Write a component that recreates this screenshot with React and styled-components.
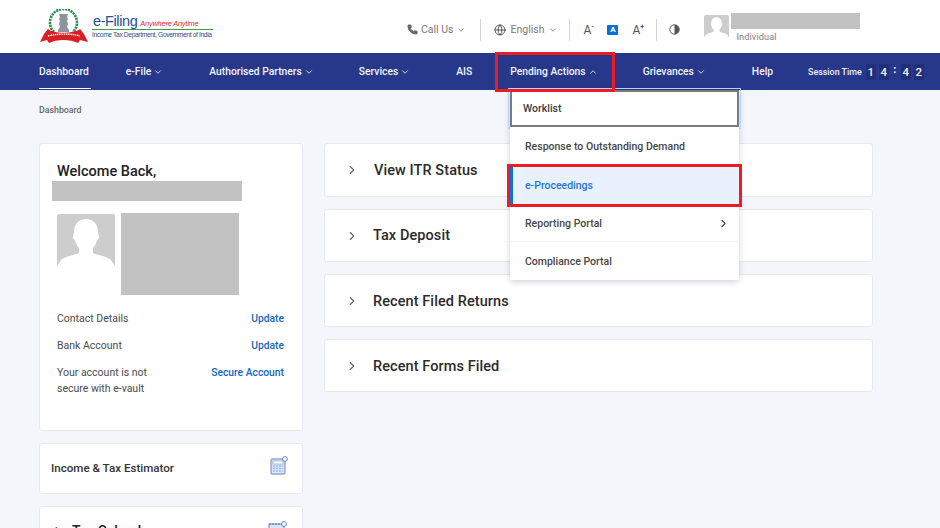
import React from 'react'
import styled, { createGlobalStyle } from 'styled-components'
import { ChevronDown, ChevronUp, ChevronRight, Phone, Globe } from 'lucide-react'

const Global = createGlobalStyle`
  html, body { margin: 0; padding: 0; background: #f4f6fb; }
  body { font-family: Roboto, "Liberation Sans", sans-serif; width: 940px; height: 528px; overflow: hidden; }
`

const Page = styled.div`
  position: relative;
  width: 940px;
  height: 528px;
  overflow: hidden;
  background: #f4f6fb;
`

const TopBar = styled.header`
  height: 53px;
  background: #fff;
  display: flex;
  align-items: center;
  padding-left: 40px;
`

const Logo = styled.div`
  display: flex;
  align-items: flex-start;
  gap: 4px;
  width: 173px;
  height: 36px;
  margin-top: -1px;
`

const LogoText = styled.div`
  display: flex;
  flex-direction: column;
  margin-top: 5px;
  width: 121px;
`

const LogoTop = styled.div`
  display: flex;
  align-items: baseline;
  gap: 3px;
  height: 16px;
  line-height: 16px;
  border-bottom: 1px solid #3f9a4a;
  padding-left: 1px;
  white-space: nowrap;
`

const Brand = styled.span`
  font-family: "Liberation Sans", sans-serif;
  font-size: 14.5px;
  letter-spacing: -0.4px;
  color: #24509a;
`

const Tagline = styled.span`
  font-family: "Liberation Sans", sans-serif;
  font-style: italic;
  font-size: 7.4px;
  letter-spacing: -0.2px;
  color: #e32636;
`

const Dept = styled.span`
  font-family: "Liberation Sans", sans-serif;
  font-size: 6.7px;
  line-height: 10px;
  letter-spacing: -0.37px;
  color: #2b4f86;
  white-space: nowrap;
`

const Tools = styled.div`
  display: flex;
  align-items: center;
  margin: 6px 0 0 194px;
  height: 22px;
  color: #7b7b7b;
  font-size: 10.5px;
`

const ToolItem = styled.div`
  display: flex;
  align-items: center;
  gap: ${p => p.$gap || 3}px;
  white-space: nowrap;
`

const Divider = styled.div`
  width: 1px;
  height: 22px;
  background: #d5d5d5;
  margin: 0 ${p => p.$right}px 0 ${p => p.$left}px;
`

const FontBtn = styled.div`
  font-size: 12px;
  color: #555;
  display: flex;
  align-items: flex-start;
  width: 13px;
  line-height: 12px;
  sup { font-size: 7px; line-height: 7px; font-weight: 700; }
`

const FontActive = styled.div`
  width: 11px;
  height: 10px;
  background: #0b6fd6;
  border-radius: 1px;
  color: #fff;
  font-size: 8px;
  font-weight: 700;
  line-height: 10px;
  text-align: center;
  margin: 0 14px 0 11px;
`

const User = styled.div`
  display: flex;
  margin: -5px 0 0 24px;
  height: 27px;
`

const UserText = styled.div`
  display: flex;
  flex-direction: column;
  margin-left: 2px;
  margin-top: -1px;
`

const Redacted = styled.div`
  background: #c2c2c2;
  width: ${p => p.$w}px;
  height: ${p => p.$h}px;
  flex-shrink: 0;
`

const Role = styled.span`
  font-size: 9.2px;
  line-height: 11px;
  letter-spacing: 0.1px;
  color: #7d7d7d;
  margin: 2px 0 0 5px;
`

const Nav = styled.nav`
  height: 37px;
  background: #27378a;
  display: flex;
  align-items: center;
  padding-left: 39px;
  color: #fff;
`

const NavItem = styled.div`
  position: relative;
  display: flex;
  align-items: center;
  gap: 2px;
  height: 37px;
  margin-left: ${p => p.$ml || 0}px;
  font-size: 10.3px;
  font-weight: 500;
  color: #f2f4fb;
  white-space: nowrap;
  ${p => p.$active && `
    &::after {
      content: "";
      position: absolute;
      left: ${p.$wide ? -2 : 0}px;
      right: ${p.$wide ? -15 : -2}px;
      bottom: 1px;
      height: 1px;
      background: #fff;
    }
  `}
`

const Session = styled.div`
  display: flex;
  align-items: center;
  margin-left: 35px;
  font-size: 8.9px;
  font-weight: 500;
  white-space: nowrap;
  color: #eef0f8;
`

const Digits = styled.div`
  display: flex;
  align-items: center;
  gap: 3px;
  margin-left: 4px;
`

const Digit = styled.span`
  width: 10px;
  height: 16px;
  background: #212f78;
  font-size: 11.5px;
  font-weight: 500;
  line-height: 16px;
  text-align: center;
`

const Colon = styled.span`
  width: 6px;
  font-size: 11px;
  font-weight: 700;
  line-height: 12px;
  text-align: center;
  margin-top: -4px;
`

const Main = styled.main`
  padding: 0 67px 0 39px;
`

const Crumb = styled.div`
  height: 53px;
  padding-top: 15px;
  box-sizing: border-box;
  font-size: 8.8px;
  line-height: 10px;
  font-weight: 500;
  color: #666;
`

const Columns = styled.div`
  display: grid;
  grid-template-columns: 264px 549px;
  gap: 21px;
  align-items: start;
`

const Stack = styled.div`
  display: flex;
  flex-direction: column;
  gap: ${p => p.$gap}px;
`

const Card = styled.section`
  background: #fff;
  border: 1px solid #e6e8f2;
  border-radius: 3px;
  box-sizing: border-box;
`

const ProfileCard = styled(Card)`
  height: 288px;
  padding: 19px 18px 0 12px;
`

const Welcome = styled.h2`
  margin: 0 0 1px 5px;
  font-size: 14.5px;
  line-height: 17px;
  font-weight: 500;
  color: #222;
`

const Photos = styled.div`
  display: flex;
  gap: 6px;
  margin: 12px 0 16px 5px;
`

const Avatar = styled.div`
  width: ${p => p.$size}px;
  height: ${p => p.$size}px;
  margin-top: ${p => p.$mt || 0}px;
  overflow: hidden;
  border-radius: 2px 2px 0 0;
  flex-shrink: 0;
`

const InfoRow = styled.div`
  display: flex;
  justify-content: space-between;
  margin-left: 5px;
  font-size: 10.5px;
  line-height: 16px;
  color: #4b4b4b;
  height: ${p => p.$h || 27}px;
`

const LinkText = styled.span`
  color: #1565c0;
  font-size: 10.3px;
  font-weight: 500;
  white-space: nowrap;
`

const WideCard = styled(Card)`
  height: ${p => p.$h}px;
  display: flex;
  align-items: center;
  justify-content: space-between;
  padding: 0 14px 2px 11px;
  font-size: 11.6px;
  font-weight: 500;
  color: #333;
`

const ClippedCard = styled(WideCard)`
  align-items: flex-start;
  padding-top: 16px;
  font-size: 14px;
  line-height: 16px;
  color: #222;
`

const TitleGroup = styled.div`
  display: flex;
  align-items: center;
  gap: 7px;
  color: #666;
  span { color: #222; }
`

const IconSlot = styled.div`
  display: flex;
  margin-top: ${p => p.$mt || 0}px;
`

const AccordionCard = styled(Card)`
  height: ${p => p.$h}px;
  display: flex;
  align-items: center;
  padding-left: 20px;
  color: #666;
`

const AccordionTitle = styled.h3`
  margin: ${p => p.$mt || 0}px 0 0 ${p => p.$ml}px;
  font-size: 14.5px;
  letter-spacing: 0.08px;
  font-weight: 500;
  color: #2b2b2b;
`

const Menu = styled.div`
  position: absolute;
  left: 510px;
  top: 90px;
  width: 229px;
  height: 190px;
  background: #fff;
  border-radius: 0 0 3px 3px;
  box-shadow: 0 2px 6px rgba(40, 50, 90, 0.22);
  display: flex;
  flex-direction: column;
`

const MenuItem = styled.div`
  display: flex;
  align-items: center;
  justify-content: space-between;
  height: ${p => p.$h}px;
  padding: 0 9px 0 ${p => (p.$selected ? 12 : 15)}px;
  font-size: 10.5px;
  font-weight: 500;
  color: ${p => (p.$selected ? '#1f75d8' : '#464646')};
  background: ${p => (p.$selected ? '#e9f1fc' : '#fff')};
  border-left: ${p => (p.$selected ? '3px solid #0f6fd8' : 'none')};
  border-bottom: ${p => (p.$line ? '1px solid #f1f1f4' : 'none')};
  box-sizing: border-box;
`

const Focused = styled.div`
  height: 37px;
  box-sizing: border-box;
  display: flex;
  align-items: center;
  padding-left: 11px;
  font-size: 10.5px;
  font-weight: 500;
  color: #3c3c3c;
  border: 2px solid #7a7a7a;
  outline: 1px solid #b7d3f5;
  outline-offset: 1px;
  margin-bottom: 1px;
`

const RedBox = styled.div`
  position: absolute;
  left: ${p => p.$x}px;
  top: ${p => p.$y}px;
  width: ${p => p.$w}px;
  height: ${p => p.$h}px;
  border: 3px solid #ea1c24;
  box-sizing: border-box;
`

const Emblem = () => (
  <svg width="48" height="34" viewBox="0 0 48 34" style={{ flexShrink: 0, marginTop: 1 }}>
    <path d="M14 23A13.5 13.5 0 1 1 33 23" fill="none" stroke="#2f8a4b" strokeWidth="2.6" strokeDasharray="2.2 .8" />
    <path d="M19 5h9l-1 3 1 2-1 2 1 3-1 3 2 3v2H18v-2l2-3-1-3 1-3-1-2 1-2z" fill="#8f949a" />
    <path d="M17 25h14" stroke="#555" strokeWidth="1" strokeDasharray="1.5 .7" />
    <path d="M8 20C14 25 33 25 40 20L44 25 48 33 40 31 38 34C30 30 17 30 9 34L7 31 0 33 4 25z" fill="#d81f26" />
    <path d="M8 27C16 24.500 32 24.500 40 27" fill="none" stroke="#fff" strokeWidth="1.4" strokeDasharray="1.2 .6" />
  </svg>
)

const CalcIcon = () => (
  <svg width="18" height="19" viewBox="0 0 18 19" style={{ display: 'block' }}>
    <rect x="1" y="3" width="14" height="15" rx="1" fill="#dbe6f8" stroke="#6f7fc4" />
    <rect x="3" y="5" width="10" height="3" fill="#fff" stroke="#8a97d2" strokeWidth=".6" />
    <path d="M3 10h10M3 12.500h10M3 15h10" stroke="#9fb9e6" strokeWidth="1.4" strokeDasharray="2 1" />
    <circle cx="15" cy="3" r="2.400" fill="#fff" stroke="#6f7fc4" />
  </svg>
)

const CalendarIcon = () => (
  <svg width="20" height="12" viewBox="0 0 20 12" style={{ display: 'block' }}>
    <rect x="1" y="3" width="15" height="12" fill="#dbe6f8" stroke="#6f7fc4" />
    <path d="M2 2v2M5 2v2M8 2v2M11 2v2M14 2v2" stroke="#6f7fc4" />
    <circle cx="16" cy="3" r="2.400" fill="#fff" stroke="#6f7fc4" />
  </svg>
)

const Person = ({ size }) => (
  <svg width={size} height={size} viewBox="0 0 58 58" style={{ display: 'block' }}>
    <rect width="58" height="58" fill="#cdcdcd" />
    <path d="M29 5c7 0 12 5 12 13l1 5c0 2-1 3-2 3-1 4-2 6-4 8v5c3 2 14 3 18 7l4 6v6H0v-6l4-6c4-4 15-5 18-7v-5c-2-2-3-4-4-8-1 0-2-1-2-3l1-5c0-8 5-13 12-13z" fill="#fff" />
  </svg>
)

const navItems = [
  { label: 'Dashboard', active: true },
  { label: 'e-File', ml: 37, caret: 'down' },
  { label: 'Authorised Partners', ml: 46, caret: 'down' },
  { label: 'Services', ml: 45, caret: 'down' },
  { label: 'AIS', ml: 46 },
  { label: 'Pending Actions', ml: 38, caret: 'up', active: true, wide: true },
  { label: 'Grievances', ml: 45, caret: 'down' },
  { label: 'Help', ml: 46 },
]

const accordions = [
  { title: 'View ITR Status', h: 54, ml: 15 },
  { title: 'Tax Deposit', h: 53, ml: 14 },
  { title: 'Recent Filed Returns', h: 53, ml: 14, mt: 1 },
  { title: 'Recent Forms Filed', h: 53, ml: 14, mt: 1 },
]

function App() {
  return (
    <Page>
      <Global />
      <TopBar>
        <Logo>
          <Emblem />
          <LogoText>
            <LogoTop>
              <Brand>e-Filing</Brand>
              <Tagline>Anywhere Anytime</Tagline>
            </LogoTop>
            <Dept>Income Tax Department, Government of India</Dept>
          </LogoText>
        </Logo>
        <Tools>
          <ToolItem>
            <Phone size={11} fill="#666" color="#666" />
            Call Us
            <ChevronDown size={10} />
          </ToolItem>
          <Divider $left={14} $right={13} />
          <ToolItem $gap={4}>
            <Globe size={12} color="#555" />
            English
            <ChevronDown size={10} />
          </ToolItem>
          <Divider $left={11} $right={13} />
          <FontBtn>A<sup>-</sup></FontBtn>
          <FontActive>A</FontActive>
          <FontBtn>A<sup>+</sup></FontBtn>
          <Divider $left={11} $right={12} />
          <svg width="11" height="11" viewBox="0 0 11 11">
            <circle cx="5.500" cy="5.500" r="4.700" fill="#fff" stroke="#555" />
            <path d="M5.500 .8a4.700 4.700 0 0 1 0 9.400z" fill="#555" />
          </svg>
          <User>
            <Avatar $size={25} $mt={1}>
              <Person size={25} />
            </Avatar>
            <UserText>
              <Redacted $w={129} $h={16} />
              <Role>Individual</Role>
            </UserText>
          </User>
        </Tools>
      </TopBar>

      <Nav>
        {navItems.map(item => (
          <NavItem key={item.label} $ml={item.ml} $active={item.active} $wide={item.wide}>
            {item.label}
            {item.caret === 'down' && <ChevronDown size={10} strokeWidth={2} />}
            {item.caret === 'up' && <ChevronUp size={10} strokeWidth={2} />}
          </NavItem>
        ))}
        <Session>
          Session Time
          <Digits>
            <Digit>1</Digit>
            <Digit>4</Digit>
            <Colon>:</Colon>
            <Digit>4</Digit>
            <Digit>2</Digit>
          </Digits>
        </Session>
      </Nav>

      <Main>
        <Crumb>Dashboard</Crumb>
        <Columns>
          <Stack $gap={12}>
            <ProfileCard>
              <Welcome>Welcome Back,</Welcome>
              <Redacted $w={190} $h={20} />
              <Photos>
                <Avatar $size={58} $mt={1}>
                  <Person size={58} />
                </Avatar>
                <Redacted $w={118} $h={82} />
              </Photos>
              <InfoRow>
                Contact Details
                <LinkText>Update</LinkText>
              </InfoRow>
              <InfoRow>
                Bank Account
                <LinkText>Update</LinkText>
              </InfoRow>
              <InfoRow $h={32}>
                <span>Your account is not<br />secure with e-vault</span>
                <LinkText>Secure Account</LinkText>
              </InfoRow>
            </ProfileCard>
            <WideCard $h={51}>
              Income &amp; Tax Estimator
              <IconSlot $mt={-5}>
                <CalcIcon />
              </IconSlot>
            </WideCard>
            <ClippedCard $h={60}>
              <TitleGroup>
                <ChevronRight size={14} />
                <span>Tax Calendar</span>
              </TitleGroup>
              <IconSlot $mt={-2}>
                <CalendarIcon />
              </IconSlot>
            </ClippedCard>
          </Stack>
          <Stack $gap={12}>
            {accordions.map(a => (
              <AccordionCard key={a.title} $h={a.h}>
                <ChevronRight size={14} />
                <AccordionTitle $ml={a.ml} $mt={a.mt}>{a.title}</AccordionTitle>
              </AccordionCard>
            ))}
          </Stack>
        </Columns>
      </Main>

      <Menu>
        <Focused>Worklist</Focused>
        <MenuItem $h={37}>Response to Outstanding Demand</MenuItem>
        <MenuItem $h={40} $selected>e-Proceedings</MenuItem>
        <MenuItem $h={37} $line>
          Reporting Portal
          <ChevronRight size={13} />
        </MenuItem>
        <MenuItem $h={38}>Compliance Portal</MenuItem>
      </Menu>

      <RedBox $x={495} $y={52} $w={120} $h={40} />
      <RedBox $x={507} $y={164} $w={235} $h={43} />
    </Page>
  )
}

export default App
